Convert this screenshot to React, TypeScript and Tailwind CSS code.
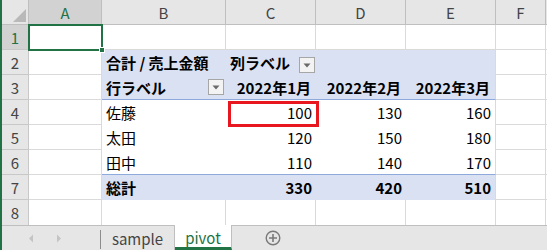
import React from "react";

const cols = ["A", "B", "C", "D", "E", "F"];

const rows: [string, number, number, number][] = [
  ["佐藤", 100, 130, 160],
  ["太田", 120, 150, 180],
  ["田中", 110, 140, 170],
];

const totals = [330, 420, 510];

const grid = "border-r border-b border-[#dadada]";
const blue = "bg-[#d9e1f2]";

const RowHead = ({ n, active }: { n: number; active?: boolean }) => (
  <div
    className={`flex items-center justify-center border-r border-b border-[#c8c8c8] text-[15px] ${
      active ? "bg-[#d2d2d2] text-[#217346]" : "bg-[#e6e6e6] text-[#444]"
    }`}
  >
    {n}
  </div>
);

const FilterButton = () => (
  <div className="w-4 h-4 border border-[#a6a6a6] bg-[#f3f3f3] flex items-center justify-center">
    <svg width="8" height="5" viewBox="0 0 8 5">
      <path d="M0.5 0.5 L7.5 0.5 L4 4.5 Z" fill="#6a6a6a" />
    </svg>
  </div>
);

const App: React.FC = () => {
  return (
    <div className="w-[547px] h-[250px] overflow-hidden relative bg-white border-l-2 border-[#217346] font-['Noto_Sans_CJK_JP','Noto_Sans',sans-serif] text-black leading-none">
      <div className="grid grid-cols-[27px_73px_124px_90px_90px_90px_50px_1fr] grid-rows-[repeat(9,25px)]">
        {/* column headers */}
        <div className="relative bg-[#e6e6e6] border-r border-b border-[#bfbfbf]">
          <svg className="absolute right-[2px] bottom-[2px]" width="13" height="13" viewBox="0 0 13 13">
            <path d="M13 0 L13 13 L0 13 Z" fill="#b9b9b9" />
          </svg>
        </div>
        {cols.map((c) => (
          <div
            key={c}
            className={`flex items-center justify-center border-r border-b border-[#bfbfbf] text-[15px] ${
              c === "A" ? "bg-[#d2d2d2] text-[#217346]" : "bg-[#e6e6e6] text-[#444]"
            }`}
          >
            {c}
          </div>
        ))}
        <div className="bg-[#e6e6e6] border-b border-[#bfbfbf]" />

        {/* row 1 */}
        <RowHead n={1} active />
        <div className={grid} />
        <div className={grid} />
        <div className={grid} />
        <div className={grid} />
        <div className={grid} />
        <div className={grid} />
        <div className="border-b border-[#dadada]" />

        {/* row 2 */}
        <RowHead n={2} />
        <div className={grid} />
        <div className={`${blue} flex items-center pl-1 text-[15px] font-bold whitespace-nowrap`}>
          合計 / 売上金額
        </div>
        <div className={`${blue} flex items-center justify-between pl-1 pr-[1px] text-[15px] font-bold whitespace-nowrap`}>
          <span>列ラベル</span>
          <span className="self-end mb-[2px]">
            <FilterButton />
          </span>
        </div>
        <div className={blue} />
        <div className={`${blue} border-r border-[#dadada]`} />
        <div className={grid} />
        <div className="border-b border-[#dadada]" />

        {/* row 3 */}
        <RowHead n={3} />
        <div className={grid} />
        <div className={`${blue} border-b border-[#8ea9db] flex items-center justify-between pl-1 pr-[2px] text-[15px] font-bold`}>
          <span>行ラベル</span>
          <FilterButton />
        </div>
        {["2022年1月", "2022年2月", "2022年3月"].map((m, i) => (
          <div
            key={m}
            className={`${blue} border-b border-[#8ea9db] flex items-center justify-end pr-[5px] text-[15px] font-bold whitespace-nowrap ${
              i === 2 ? "border-r border-r-[#dadada]" : ""
            }`}
          >
            {m}
          </div>
        ))}
        <div className={grid} />
        <div className="border-b border-[#dadada]" />

        {/* rows 4-6 */}
        {rows.map(([name, a, b, c], i) => {
          const last = i === rows.length - 1;
          const edge = last ? "border-b border-[#8ea9db]" : "";
          return (
            <React.Fragment key={name}>
              <RowHead n={4 + i} />
              <div className={grid} />
              <div className={`${edge} flex items-center pl-1 text-[15px]`}>{name}</div>
              <div className={`${edge} flex items-center justify-end pr-[4px] text-[15px]`}>{a}</div>
              <div className={`${edge} flex items-center justify-end pr-[4px] text-[15px]`}>{b}</div>
              <div className={`${edge} border-r border-r-[#dadada] flex items-center justify-end pr-[4px] text-[15px]`}>
                {c}
              </div>
              <div className={grid} />
              <div className="border-b border-[#dadada]" />
            </React.Fragment>
          );
        })}

        {/* row 7 */}
        <RowHead n={7} />
        <div className={grid} />
        <div className={`${blue} flex items-center pl-1 text-[15px] font-bold`}>総計</div>
        {totals.map((t, i) => (
          <div
            key={t}
            className={`${blue} flex items-center justify-end pr-[4px] text-[15px] font-bold ${
              i === 2 ? "border-r border-[#dadada]" : ""
            }`}
          >
            {t}
          </div>
        ))}
        <div className={grid} />
        <div className="border-b border-[#dadada]" />

        {/* row 8 */}
        <div className="flex items-center justify-center border-r border-[#c8c8c8] bg-[#e6e6e6] text-[#444] text-[15px]">
          8
        </div>
        <div className="border-r border-[#dadada]" />
        <div className="border-r border-[#dadada]" />
        <div className="border-r border-[#dadada]" />
        <div className="border-r border-[#dadada]" />
        <div className="border-r border-[#dadada]" />
        <div className="border-r border-[#dadada]" />
        <div />
      </div>

      {/* sheet tabs */}
      <div className="h-[25px] flex bg-[#e6e6e6] text-[15px]">
        <div className="w-[99px] border-t border-[#bfbfbf] flex items-center">
          <svg className="ml-[26px]" width="6" height="9" viewBox="0 0 6 9">
            <path d="M5 0.5 L1 4.5 L5 8.5 Z" fill="#c4c4c4" />
          </svg>
          <svg className="ml-[22px]" width="6" height="9" viewBox="0 0 6 9">
            <path d="M1 0.5 L5 4.5 L1 8.5 Z" fill="#c4c4c4" />
          </svg>
          <div className="ml-auto w-px h-[19px] mt-[4px] self-start bg-[#8c8c8c]" />
        </div>
        <div className="w-[74px] border-t border-r border-[#bfbfbf] flex items-center justify-center text-[#444]">
          sample
        </div>
        <div className="w-[57px] bg-white border-r border-[#bfbfbf] border-b-[3px] border-b-[#217346] flex items-center justify-center pt-[2px] text-[#217346]">
          pivot
        </div>
        <div className="flex-1 border-t border-[#bfbfbf] flex items-center">
          <svg className="ml-[33px]" width="16" height="16" viewBox="0 0 16 16">
            <circle cx="8" cy="8" r="6.8" fill="none" stroke="#7a7a7a" strokeWidth="1.4" />
            <path d="M8 4 V12 M4 8 H12" stroke="#7a7a7a" strokeWidth="1.6" />
          </svg>
        </div>
      </div>

      {/* active cell A1 */}
      <div className="absolute left-[26px] top-[24px] w-[75px] h-[27px] border-2 border-[#217346]" />
      <div className="absolute left-[97px] top-[47px] w-[6px] h-[6px] bg-[#217346] border border-white" />

      {/* red highlight around C4 */}
      <div className="absolute left-[226px] top-[101px] w-[91px] h-[26px] border-[3px] border-[#e8161f]" />
    </div>
  );
};

export default App;
